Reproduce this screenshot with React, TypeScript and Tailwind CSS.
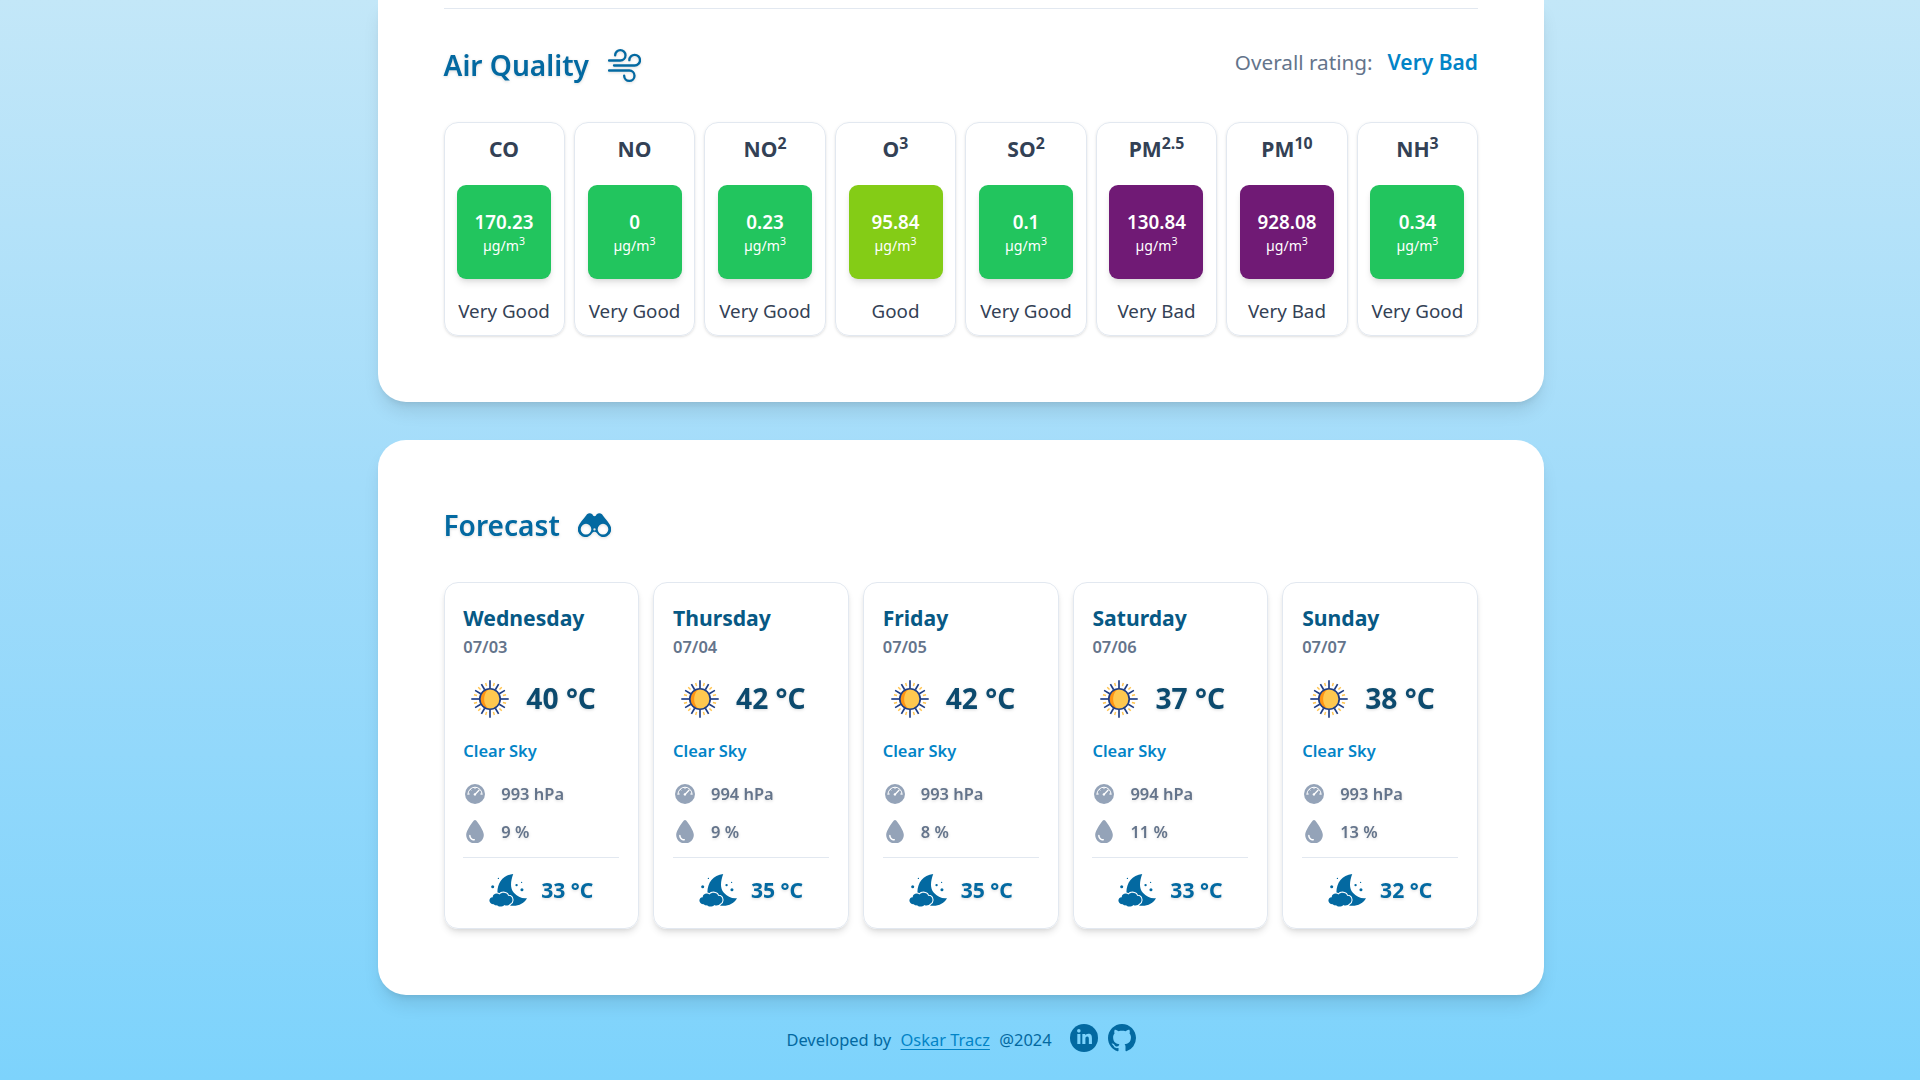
import type { ReactNode } from "react";
import { FaDroplet, FaLinkedinIn } from "react-icons/fa6";
import { BsGithub } from "react-icons/bs";

const SHADOW = "[filter:drop-shadow(0_1.5px_1.5px_rgba(0,0,0,0.14))]";

function WindIcon() {
  return (
    <svg viewBox="0 0 99 98" className="h-[33px] w-[33px] text-[#0369a1]" fill="none" stroke="currentColor" strokeWidth="7" strokeLinecap="round">
      <path d="M3 34H37a15.500 15.500 0 1 0-15.500-15.500" />
      <path d="M18 49H80a16 16 0 1 0-16-16" />
      <path d="M3 64H64a15.500 15.500 0 1 1-15.500 15.500" />
    </svg>
  );
}

function BinocularsIcon() {
  return (
    <svg viewBox="0 0 99 71" className="h-[24px] w-[33px] text-[#0369a1]" fill="currentColor">
      <path
        fillRule="evenodd"
        d="M27 3Q35-2 43 3Q45 9 49.500 9Q54 9 56 3Q64-2 72 3C76 10 92 26 97 38A23 23 0 1 1 56 59Q53 55.500 49.500 55.500Q46 55.500 43 59A23 23 0 1 1 2 38C7 26 23 10 27 3ZM24 32a16 16 0 1 0 0 32a16 16 0 1 0 0-32ZM75 32a16 16 0 1 0 0 32a16 16 0 1 0 0-32ZM49.500 45a3.500 3.500 0 1 0 0 7a3.500 3.500 0 1 0 0-7Z"
      />
    </svg>
  );
}

const RAYS = [0, 30, 60, 90, 120, 150, 180, 210, 240, 270, 300, 330];

function SunIcon() {
  return (
    <svg viewBox="0 0 64 64" className="h-[38px] w-[38px]" strokeLinecap="butt">
      {RAYS.map((a) => (
        <path key={a} d={a % 90 === 0 ? "M32 0.500V14" : "M32 3V14"} stroke="#1f3d83" strokeWidth="2.800" transform={`rotate(${a} 32 32)`} />
      ))}
      {RAYS.map((a) => (
        <path key={a} d="M32 4V9.500" stroke="#ffc34c" strokeWidth="2.400" transform={`rotate(${a + 15} 32 32)`} />
      ))}
      <circle cx="32" cy="32" r="17.200" fill="#ffc84f" />
      <path d="M32 14.800A17.200 17.200 0 0 0 32 49.200C19 44 19 20 32 14.800Z" fill="#ff9412" />
      <circle cx="32" cy="32" r="17.200" fill="none" stroke="#1f3d83" strokeWidth="2.800" />
    </svg>
  );
}

function GaugeIcon() {
  return (
    <svg viewBox="0 0 20 20" className="h-[20px] w-[20px] text-[#94a3b8]">
      <circle cx="10" cy="10" r="10" fill="currentColor" />
      <g fill="none" stroke="#fff" strokeLinecap="round">
        <path d="M2.900 10.300A7.100 7.100 0 0 1 17.100 10.300" strokeWidth="1" />
        <path d="M10 3.500V4.700M5.200 5.300L6 6.100M3.200 10H4.400M16.800 10H15.600" strokeWidth="0.900" />
        <path d="M9.900 10.500L14 6.200" strokeWidth="1.300" />
      </g>
      <circle cx="9.900" cy="10.400" r="1.200" fill="#fff" />
    </svg>
  );
}

function NightIcon() {
  return (
    <svg viewBox="0 0 113 98" className="h-[33px] w-[38px] text-[#0369a1]" fill="currentColor">
      <path d="M72 0C64 22 62 42 74 56C84 68 99 74 113 72C104 88 86 97 64 94L40 70L25 55C25 26 42 3 72 0Z" />
      <path
        d="M14 90C-2 90-3 70 11 69C11 59 24 55 31 61C38 52 55 54 57 65C71 64 74 82 64 88C60 94 50 95 46 92C40 98 28 98 24 93C20 94 16 93 14 90Z"
        stroke="#fff"
        strokeWidth="6"
        paintOrder="stroke"
      />
      <circle cx="11" cy="38" r="4.500" />
      <circle cx="28" cy="13" r="2" />
      <circle cx="82" cy="33" r="3.500" />
      <circle cx="97" cy="25" r="1.800" />
      <circle cx="98" cy="47" r="4.500" />
    </svg>
  );
}

const GREEN = "bg-[#22c55e]";
const LIME = "bg-[#84cc16]";
const PURPLE = "bg-[#701a75]";

const pollutants = [
  { name: "CO", sup: "", value: "170.23", rating: "Very Good", color: GREEN },
  { name: "NO", sup: "", value: "0", rating: "Very Good", color: GREEN },
  { name: "NO", sup: "2", value: "0.23", rating: "Very Good", color: GREEN },
  { name: "O", sup: "3", value: "95.84", rating: "Good", color: LIME },
  { name: "SO", sup: "2", value: "0.1", rating: "Very Good", color: GREEN },
  { name: "PM", sup: "2.5", value: "130.84", rating: "Very Bad", color: PURPLE },
  { name: "PM", sup: "10", value: "928.08", rating: "Very Bad", color: PURPLE },
  { name: "NH", sup: "3", value: "0.34", rating: "Very Good", color: GREEN },
];

const days = [
  { day: "Wednesday", date: "07/03", temp: 40, pressure: 993, humidity: 9, night: 33 },
  { day: "Thursday", date: "07/04", temp: 42, pressure: 994, humidity: 9, night: 35 },
  { day: "Friday", date: "07/05", temp: 42, pressure: 993, humidity: 8, night: 35 },
  { day: "Saturday", date: "07/06", temp: 37, pressure: 994, humidity: 11, night: 33 },
  { day: "Sunday", date: "07/07", temp: 38, pressure: 993, humidity: 13, night: 32 },
];

function Heading({ title, icon }: { title: string; icon: ReactNode }) {
  return (
    <h2 className={`flex h-[40px] items-center gap-[18.500px] text-[28.100px] leading-[41px] font-semibold text-[#0369a1] ${SHADOW}`}>
      {title}
      {icon}
    </h2>
  );
}

export default function App() {
  return (
    <div className="flex h-[1080px] flex-col items-center overflow-hidden bg-linear-to-b from-[#c3e7f8] via-[#a2dcfa] via-45% to-[#7dd3fc] pl-[2px] font-['Noto_Sans',sans-serif]">
      <section className="h-[401.700px] w-[1166px] shrink-0 rounded-b-[28px] bg-white pr-[66px] pl-[65.500px] pt-[8px] shadow-[0_12px_18px_-3px_rgb(0_0_0/0.1),0_5px_7px_-4px_rgb(0_0_0/0.1)]">
        <hr className="border-t border-[#e2e8f0]" />
        <div className="mt-[36px] flex items-center justify-between">
          <Heading title="Air Quality" icon={<WindIcon />} />
          <p className="flex gap-[15px] pb-[4.500px] text-[21px] leading-[33px] text-[#64748b]">
            <span className="text-[20.700px]">Overall rating:</span>
            <span className="font-semibold text-[#0284c7]">Very Bad</span>
          </p>
        </div>
        <div className="mt-[37px] grid grid-cols-8 gap-[9.400px]">
          {pollutants.map((p) => (
            <div key={p.name + p.sup} className="flex h-[214px] flex-col items-center rounded-[14px] border border-[#e2e8f0] pt-[9px] shadow-[0_1px_3px_rgb(0_0_0/0.1),0_1px_2px_-1px_rgb(0_0_0/0.1)]">
              <h3 className="text-[21.150px] leading-[33px] font-bold text-[#334155]">
                {p.name}
                {p.sup && <sup>{p.sup}</sup>}
              </h3>
              <div className={`mt-[19.500px] flex h-[94px] w-[94px] flex-col items-center justify-center rounded-[9px] text-white shadow-[0_5px_7px_-1px_rgb(0_0_0/0.1),0_2px_5px_-2px_rgb(0_0_0/0.1)] ${p.color}`}>
                <span className="text-[18.800px] leading-[28px] font-semibold">{p.value}</span>
                <span className="text-[14.100px] leading-[20px]">
                  µg/m<sup>3</sup>
                </span>
              </div>
              <p className="mt-[18.700px] text-[18.800px] leading-[28px] whitespace-nowrap text-[#334155]">{p.rating}</p>
            </div>
          ))}
        </div>
      </section>

      <section className="mt-[38px] h-[555.300px] w-[1166px] shrink-0 rounded-[28px] bg-white pr-[66px] pl-[65.500px] pt-[65.500px] shadow-[0_12px_18px_-3px_rgb(0_0_0/0.1),0_5px_7px_-4px_rgb(0_0_0/0.1)]">
        <Heading title="Forecast" icon={<BinocularsIcon />} />
        <div className="mt-[37px] grid grid-cols-5 gap-[14.100px]">
          {days.map((d) => (
            <article key={d.day} className="flex h-[347px] flex-col rounded-[14px] border border-[#e2e8f0] px-[18.800px] pt-[17.800px] shadow-[0_5px_7px_-1px_rgb(0_0_0/0.1),0_2px_5px_-2px_rgb(0_0_0/0.1)]">
              <h3 className="text-[21.150px] leading-[33px] font-bold text-[#075985]">{d.day}</h3>
              <p className="mt-[0.700px] text-[16.450px] leading-[24px] font-semibold text-[#64748b]">{d.date}</p>
              <div className="mt-[19px] flex h-[42px] items-center gap-[17px] pl-[8px] text-[28.200px] leading-[42px] font-bold text-[#0c4a6e]">
                <SunIcon />
                <span className={`-mt-[2px] ${SHADOW}`}>{d.temp} °C</span>
              </div>
              <p className="mt-[19px] text-[16.450px] leading-[24px] font-semibold text-[#0284c7]">Clear Sky</p>
              <div className="mt-[19px] flex flex-col gap-[14px] text-[16.450px] leading-[24px] font-semibold text-[#64748b]">
                <div className="flex h-[24px] items-center">
                  <span className="flex w-[38px] shrink-0 pl-[2px]"><GaugeIcon /></span>
                  <span className={SHADOW}>{d.pressure} hPa</span>
                </div>
                <div className="flex h-[24px] items-center">
                  <span className="flex w-[38px] shrink-0 pl-[3px]"><FaDroplet className="h-[23.500px] w-[18px] text-[#94a3b8]" /></span>
                  <span className={SHADOW}>{d.humidity} %</span>
                </div>
              </div>
              <hr className="mt-[13.500px] border-t border-[#e2e8f0]" />
              <div className="mt-[15.500px] flex h-[34px] items-center justify-center gap-[14px] text-[21.150px] leading-[33px] font-bold text-[#0369a1]">
                <NightIcon />
                <span className={`-mt-[2px] ${SHADOW}`}>{d.night} °C</span>
              </div>
            </article>
          ))}
        </div>
      </section>

      <footer className="mt-[24px] flex items-start text-[16.450px] leading-[24px] text-[#0369a1]">
        <p className="mt-[9.500px] flex gap-[9.400px]">
          Developed by
          <a href="#" className="text-[#0284c7] underline decoration-1 underline-offset-[3px]">Oskar Tracz</a>
          <span>@2024</span>
        </p>
        <div className="mt-[5px] ml-[18.500px] flex gap-[9.400px] text-[#0369a1]">
          <span className="flex h-[28px] w-[28px] items-center justify-center rounded-full bg-[#0369a1]">
            <FaLinkedinIn className="mb-px h-[17px] w-[17px] text-[#7dd3fc]" />
          </span>
          <BsGithub className="h-[28px] w-[28px]" />
        </div>
      </footer>
    </div>
  );
}
